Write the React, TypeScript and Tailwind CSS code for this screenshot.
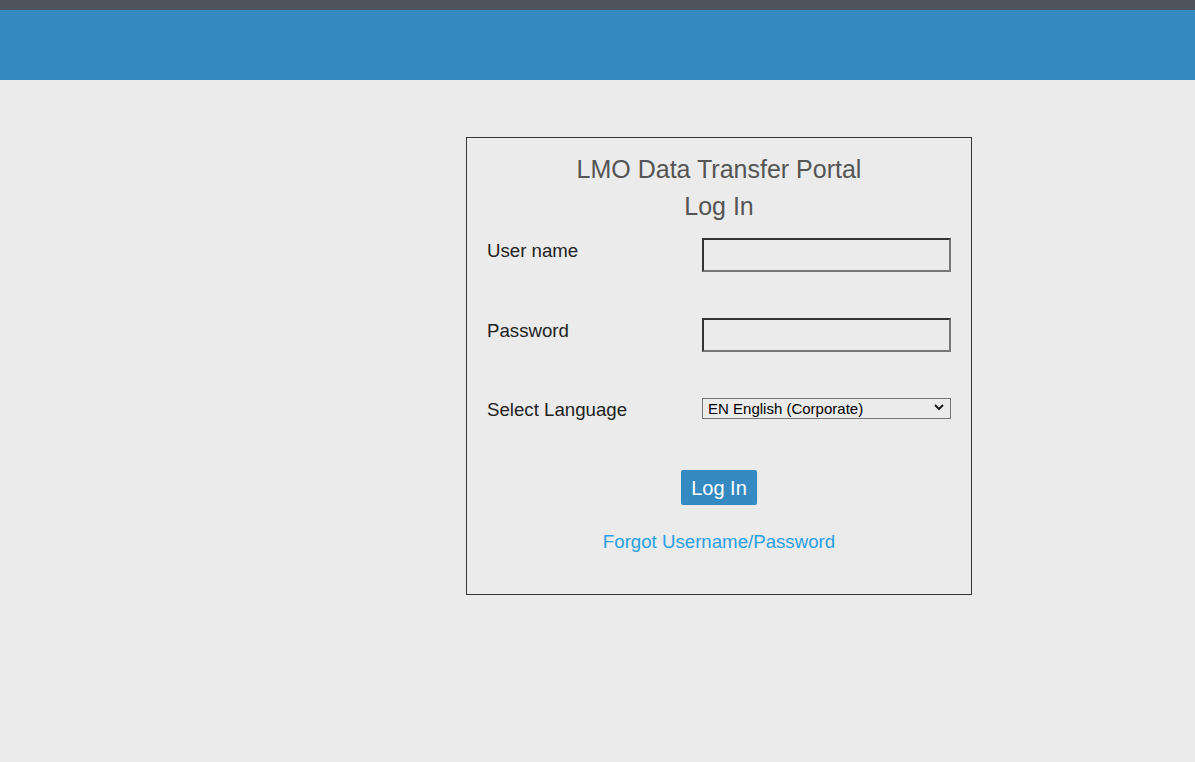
export default function App() {
  return (
    <div className="min-h-screen w-full bg-[#ebebeb] font-['Liberation_Sans',Arial,sans-serif]">
      <div className="h-[10px] bg-[#4f535c]" />
      <div className="h-[70px] bg-[#358ac1]" />

      <main className="flex pt-[57px] pl-[466px]">
        <form className="flex w-[506px] flex-col border border-[#333] px-5 pt-[13px] pb-[39px]">
          <div className="text-center text-[25px] leading-[37px] text-[#555]">
            <h1>LMO Data Transfer Portal</h1>
            <h2>Log In</h2>
          </div>

          <div className="mt-[13px] flex h-[34px]">
            <label className="mt-[2px] w-[216px] text-[18.67px] leading-[21px] text-[#222]">User name</label>
            <input
              type="text"
              className="h-[34px] w-[250px] border-2 border-t-[#333] border-l-[#333] border-b-[#777] border-r-[#777] bg-[#ebebeb] px-1"
            />
          </div>

          <div className="mt-[46px] flex h-[34px]">
            <label className="mt-[2px] w-[216px] text-[18.67px] leading-[21px] text-[#222]">Password</label>
            <input
              type="password"
              className="h-[34px] w-[250px] border-2 border-t-[#333] border-l-[#333] border-b-[#777] border-r-[#777] bg-[#ebebeb] px-1"
            />
          </div>

          <div className="mt-[45px] flex h-[21px]">
            <label className="mt-[2px] w-[216px] text-[18.67px] leading-[21px] text-[#222]">Select Language</label>
            <div className="relative h-[21px] w-[250px]">
              <select className="h-full w-full appearance-none border border-[#767676] bg-[#ebebeb] pl-[5px] text-[15px] leading-[19px] text-black">
                <option>EN English (Corporate)</option>
              </select>
              <svg
                className="pointer-events-none absolute right-[7px] top-[7px]"
                width="10"
                height="7"
                viewBox="0 0 10 7"
                fill="none"
                stroke="#111"
                strokeWidth="1.8"
              >
                <path d="M1 1l4 4 4-4" />
              </svg>
            </div>
          </div>

          <div className="mt-[52px] flex justify-center">
            <button
              type="button"
              className="h-[35px] w-[76px] rounded-[2px] bg-[#358ac1] text-[20px] text-white"
            >
              Log In
            </button>
          </div>

          <div className="mt-[25px] text-center leading-[24px]">
            <a href="#" className="text-[18.67px] text-[#2a9fe3]">
              Forgot Username/Password
            </a>
          </div>
        </form>
      </main>
    </div>
  );
}
